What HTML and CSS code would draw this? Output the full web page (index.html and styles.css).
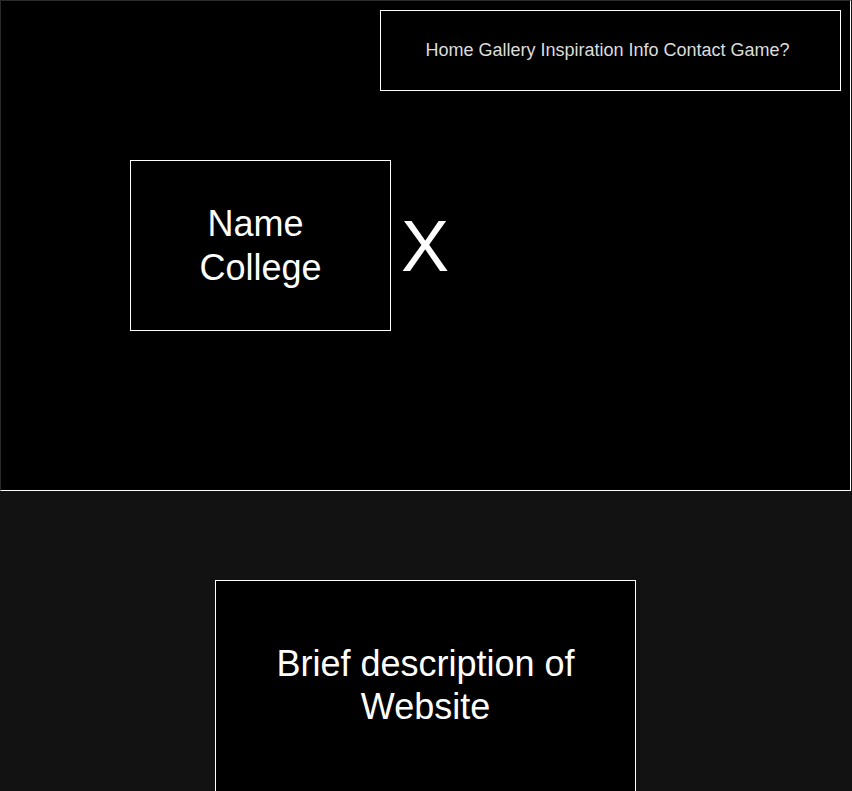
FILE: index.html
```html
<!DOCTYPE html>
<html>
<head>
<meta charset="utf-8">
<link rel="stylesheet" href="styles.css">
</head>
<body>
<header class="hero">
  <nav class="nav">Home Gallery Inspiration Info Contact Game?</nav>
  <div class="intro">
    <div class="name-box">Name&nbsp;<br>College</div>
    <div class="mark">X</div>
  </div>
</header>
<section class="about">
  <div class="about-box">Brief description of Website</div>
</section>
</body>
</html>
```
FILE: styles.css
```css
html, body {
  margin: 0;
  padding: 0;
  background: #121212;
  font-family: "Liberation Sans", Arial, sans-serif;
  color: #fff;
}
.hero {
  box-sizing: border-box;
  width: 851px;
  height: 491px;
  background: #000;
  border-style: solid;
  border-width: 1px;
  border-color: #2a2a2a #fff #fff #2a2a2a;
  padding: 9px 9px 0 0;
  display: flex;
  flex-direction: column;
}
.nav {
  align-self: flex-end;
  box-sizing: border-box;
  width: 461px;
  height: 81px;
  border: 1px solid #fff;
  display: flex;
  align-items: center;
  justify-content: center;
  font-size: 18px;
  color: #ddd;
  padding-right: 6px;
}
.intro {
  display: flex;
  align-items: center;
  margin-top: 69px;
  margin-left: 129px;
}
.name-box {
  box-sizing: border-box;
  width: 261px;
  height: 171px;
  border: 1px solid #fff;
  display: flex;
  align-items: center;
  justify-content: center;
  text-align: center;
  font-size: 36px;
  line-height: 44px;
}
.mark {
  font-size: 72px;
  margin-left: 10px;
  line-height: 1;
}
.about {
  display: flex;
  justify-content: center;
  padding-top: 89px;
  padding-right: 1px;
}
.about-box {
  box-sizing: border-box;
  width: 421px;
  height: 230px;
  border: 1px solid #fff;
  background: #000;
  padding: 61px 40px 0;
  text-align: center;
  font-size: 36px;
  line-height: 43px;
}
```
